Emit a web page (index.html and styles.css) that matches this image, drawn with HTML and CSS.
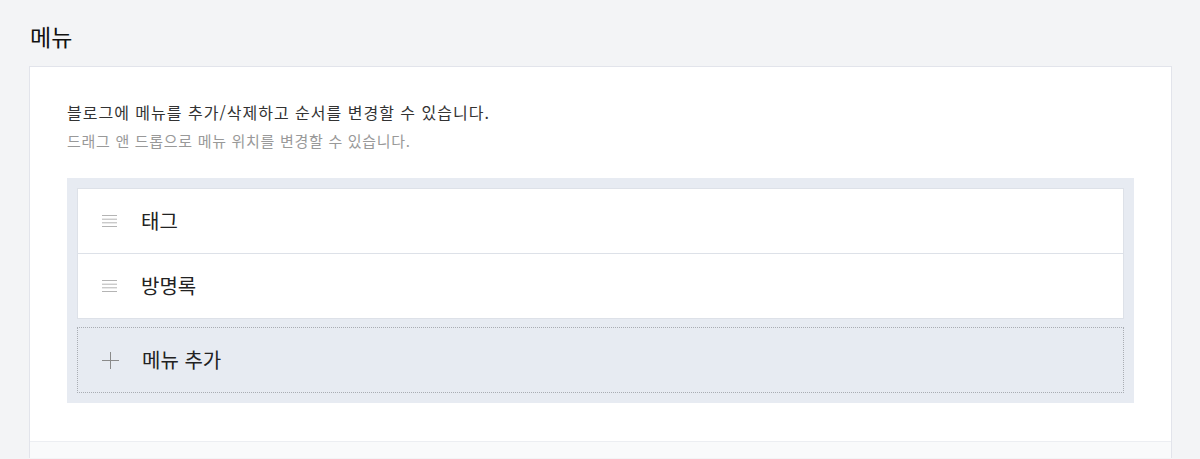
FILE: index.html
```html
<!DOCTYPE html>
<html lang="ko">
<head>
<meta charset="utf-8">
<title>메뉴</title>
<link rel="stylesheet" href="styles.css">
</head>
<body>
<div class="page">
  <h1 class="page-title">메뉴</h1>
  <section class="card">
    <div class="card-body">
      <p class="desc">블로그에 메뉴를 추가/삭제하고 순서를 변경할 수 있습니다.</p>
      <p class="desc-sub">드래그 앤 드롭으로 메뉴 위치를 변경할 수 있습니다.</p>
      <div class="menu-list">
        <div class="menu-item">
          <svg class="drag-icon" width="15" height="12" viewBox="0 0 15 12"><g stroke="#b4b4b4" stroke-width="1"><line x1="0" y1="0.5" x2="15" y2="0.5"/><line x1="0" y1="4.2" x2="15" y2="4.2"/><line x1="0" y1="7.8" x2="15" y2="7.8"/><line x1="0" y1="11.5" x2="15" y2="11.5"/></g></svg>
          <span class="menu-name">태그</span>
        </div>
        <div class="menu-item">
          <svg class="drag-icon" width="15" height="12" viewBox="0 0 15 12"><g stroke="#b4b4b4" stroke-width="1"><line x1="0" y1="0.5" x2="15" y2="0.5"/><line x1="0" y1="4.2" x2="15" y2="4.2"/><line x1="0" y1="7.8" x2="15" y2="7.8"/><line x1="0" y1="11.5" x2="15" y2="11.5"/></g></svg>
          <span class="menu-name">방명록</span>
        </div>
        <div class="menu-add">
          <svg class="plus-icon" width="17" height="17" viewBox="0 0 17 17"><g stroke="#8a8a8a" stroke-width="1"><line x1="0" y1="8.5" x2="17" y2="8.5"/><line x1="8.5" y1="0" x2="8.5" y2="17"/></g></svg>
          <span class="menu-name">메뉴 추가</span>
        </div>
      </div>
    </div>
    <div class="card-footer"></div>
  </section>
</div>
</body>
</html>
```
FILE: styles.css
```css
html, body {
  margin: 0;
  padding: 0;
  background: #f3f4f6;
  font-family: "Noto Sans CJK KR", "Noto Sans", sans-serif;
  color: #222;
}
.page {
  padding: 20px 28px 0 29px;
}
.page-title {
  margin: 0 0 14px 1px;
  font-size: 23px;
  font-weight: 400;
  line-height: 32px;
  color: #111;
}
.card {
  background: #fff;
  border: 1px solid #e2e4eb;
  border-bottom: none;
}
.card-body {
  padding: 33px 37px 38px 37px;
}
.desc {
  margin: 0;
  font-size: 16px;
  line-height: 24px;
  letter-spacing: 1px;
  color: #333;
}
.desc-sub {
  margin: 6px 0 0 0;
  font-size: 15px;
  line-height: 22px;
  letter-spacing: 0.7px;
  color: #999;
}
.menu-list {
  margin-top: 26px;
  background: #e7ebf2;
  padding: 10px;
  display: flex;
  flex-direction: column;
}
.menu-item {
  height: 64px;
  background: #fff;
  border: 1px solid #dde1e8;
  display: flex;
  align-items: center;
  padding-left: 24px;
  gap: 24px;
}
.menu-item + .menu-item {
  margin-top: -1px;
}
.menu-add {
  margin-top: 8px;
  height: 64px;
  border: 1px dotted #a9adb3;
  display: flex;
  align-items: center;
  padding-left: 24px;
  gap: 23px;
  background: #e7ebf2;
}
.drag-icon, .plus-icon {
  display: block;
  flex: none;
}
.menu-name {
  font-size: 20px;
  line-height: 26px;
  color: #222;
}
.card-footer {
  height: 16px;
  background: #f9fafb;
  border-top: 1px solid #eceef2;
}
```
